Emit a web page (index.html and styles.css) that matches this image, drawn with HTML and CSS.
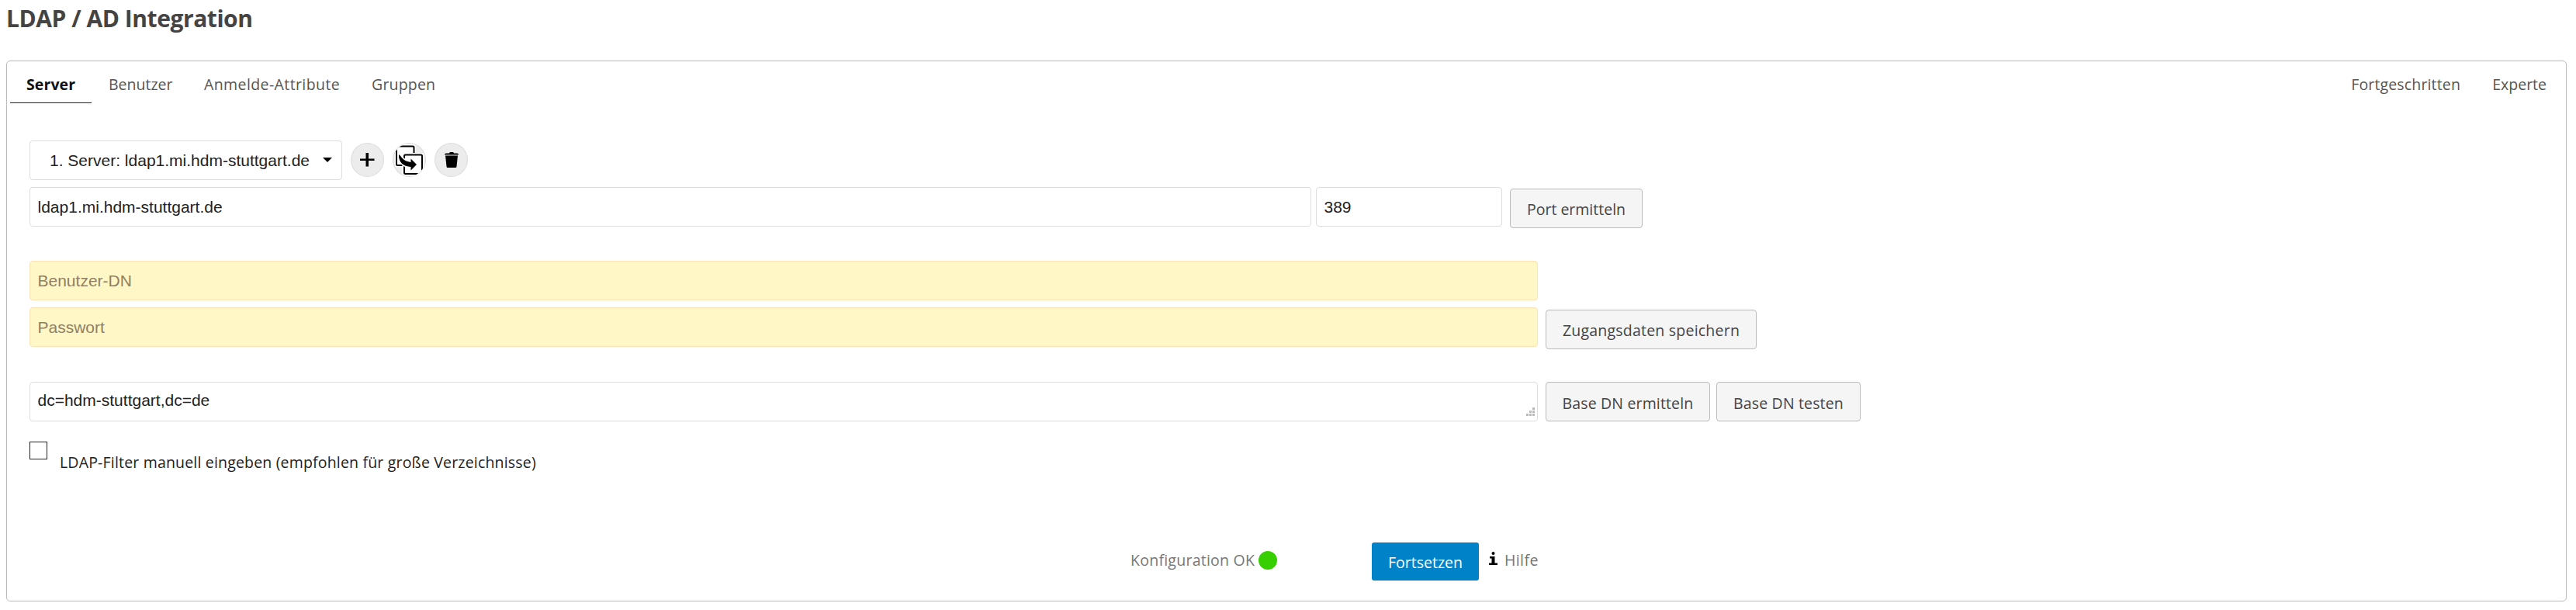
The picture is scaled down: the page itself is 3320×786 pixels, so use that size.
FILE: index.html
```html
<!DOCTYPE html>
<html lang="de">
<head>
<meta charset="utf-8">
<title>LDAP / AD Integration</title>
<link rel="stylesheet" href="styles.css">
</head>
<body>
<h1 class="title"><span>LDAP / AD Integration</span></h1>
<main class="panel">
  <nav class="tabs">
    <a class="tab tab-active"><span>Server</span></a>
    <a class="tab tab-user"><span>Benutzer</span></a>
    <a class="tab tab-login"><span>Anmelde-Attribute</span></a>
    <a class="tab tab-groups"><span>Gruppen</span></a>
    <a class="tab tab-advanced"><span>Fortgeschritten</span></a>
    <a class="tab tab-expert"><span>Experte</span></a>
  </nav>
  <div class="row server-row">
    <div class="field select"><span>1. Server: ldap1.mi.hdm-stuttgart.de</span>
      <svg class="caret" width="12" height="6" viewBox="0 0 12 6"><path d="M0 0h12L6 6z"/></svg>
    </div>
    <button class="round" aria-label="Hinzufügen"><svg width="41" height="42" viewBox="0 0 41 42"><path d="M18.500 12h3.500v7.500h7.500v2.500H22v7.500h-3.500V22H11v-2.500h7.500z"/></svg></button>
    <button class="round" aria-label="Kopieren"><svg width="41" height="42" viewBox="0 0 41 42">
      <g fill="none" stroke="#fff" stroke-width="5"><rect x="4" y="3.500" width="22.500" height="24.500" rx="1.500"/><rect x="14" y="14.500" width="23" height="24.500" rx="1.500"/></g>
      <rect x="4" y="3.500" width="22.500" height="24.500" rx="1.500" fill="#fff" stroke="#000" stroke-width="2"/>
      <rect x="14" y="14.500" width="23" height="24.500" rx="1.500" fill="#fff" stroke="#fff" stroke-width="5"/>
      <rect x="14" y="14.500" width="23" height="24.500" rx="1.500" fill="#fff" stroke="#000" stroke-width="2"/>
      <path d="M7 14.500c3 0 3 7.500 15.500 9.500v-4.500L30 27l-7.500 7.500v-4.500C13 29.500 6.500 24 7 14.500z" stroke="#fff" stroke-width="3" paint-order="stroke"/></svg></button>
    <button class="round" aria-label="Löschen"><svg width="41" height="42" viewBox="0 0 41 42"><path d="M12 14.500q0-2 2-2h4q0-1.500 1.500-1.500h3q1.500 0 1.500 1.500h4q2 0 2 2zM13 15.500h16l-1.500 14q-.2 1.500-1.500 1.500h-10q-1.300 0-1.500-1.500z"/></svg></button>
  </div>
  <div class="row host-row">
    <div class="field host"><span>ldap1.mi.hdm-stuttgart.de</span></div>
    <div class="field port"><span>389</span></div>
    <button class="btn btn-port"><span>Port ermitteln</span></button>
  </div>
  <div class="row user-row">
    <div class="field wide warn"><span>Benutzer-DN</span></div>
  </div>
  <div class="row pass-row">
    <div class="field wide warn"><span>Passwort</span></div>
    <button class="btn btn-save"><span>Zugangsdaten speichern</span></button>
  </div>
  <div class="row base-row">
    <div class="field wide base"><span>dc=hdm-stuttgart,dc=de</span>
      <svg class="grip" width="11" height="11" viewBox="0 0 11 11"><path d="M8 0h3v3H8zM4 4h3v3H4zM8 4h3v3H8zM0 8h3v3H0zM4 8h3v3H4zM8 8h3v3H8z"/></svg>
    </div>
    <button class="btn btn-detect"><span>Base DN ermitteln</span></button>
    <button class="btn btn-test"><span>Base DN testen</span></button>
  </div>
  <label class="row filter-row"><i class="checkbox"></i><span>LDAP-Filter manuell eingeben (empfohlen für große Verzeichnisse)</span></label>
  <footer class="footer">
    <div class="status"><span>Konfiguration OK</span></div>
    <i class="dot"></i>
    <button class="btn primary"><span>Fortsetzen</span></button>
    <svg class="info" width="11" height="17" viewBox="0 0 11 17"><circle cx="5.500" cy="2" r="2"/><path d="M1 6h6.500v8.500H11V17H0v-2.500h3.500v-6H1z"/></svg>
    <a class="help"><span>Hilfe</span></a>
  </footer>
</main>
</body>
</html>
```
FILE: styles.css
```css
* { box-sizing: border-box; }
body { margin: 0; background: #fff; color: #222; font: 19.5px/27px "Open Sans", "Noto Sans", sans-serif; }
span { white-space: nowrap; }
svg { display: block; flex: none; }

.title { margin: 0 0 0 8px; height: 78px; padding-top: 4px; font-size: 30px; line-height: 40px; letter-spacing: -.45px; color: #444; }
.panel { margin-left: 8px; width: 3300px; height: 697px; border: 1px solid #bbb; border-radius: 5px; }

/* Tabs */
.tabs { display: flex; height: 54px; padding: 0 25px 0 4px; color: #555; }
.tab { flex: none; padding-top: 16px; }
.tab-active { width: 105px; padding-left: 21px; color: #111; font-weight: 700; letter-spacing: .1px; border-bottom: 1px solid #222; }
.tab-user { width: 145px; padding-left: 22px; }
.tab-login { width: 216px; letter-spacing: .4px; }
.tab-groups { letter-spacing: .2px; }
.tab-advanced { margin-left: auto; width: 182px; letter-spacing: .15px; }

/* Form rows */
.row { display: flex; margin-left: 29px; }
.server-row { margin-top: 48px; height: 51px; }
.host-row { margin-top: 9px; height: 53px; }
.user-row { margin-top: 42px; height: 51px; }
.pass-row { margin-top: 9px; height: 54px; }
.base-row { margin-top: 42px; height: 51px; }
.filter-row { margin-top: 26px; height: 40px; }

.field { display: flex; flex: none; align-items: center; height: 51px; padding-left: 9.500px; border: 1px solid #ddd; border-radius: 4px; font-family: "Liberation Sans", Arial, sans-serif; font-size: 21px; }
.select { width: 403px; padding-left: 25px; }
.caret { margin: 0 0 2px 17px; }
.host { width: 1652px; }
.port { width: 240px; margin-left: 6px; }
.wide { width: 1944px; }
.warn { background: #fff7c5; border-color: #ffe3b4; color: #907f63; }
.base { padding-bottom: 4px; }
.grip { margin: 30px 3px 0 auto; fill: #bbb; }

.round { width: 43px; height: 44px; margin: 3px 0 0 11px; padding: 0; overflow: hidden; border: 1px solid #ddd; border-radius: 50%; background: #ececec; }

.btn { flex: none; height: 51px; margin-left: 10px; padding: 2px 0 0; border: 1px solid #bbb; border-radius: 4px; background: #f5f5f5; color: #444; font: inherit; }
.btn-port { width: 171px; margin-top: 2px; }
.btn-save { width: 272px; margin-top: 3px; letter-spacing: .22px; }
.btn-detect { width: 212px; padding-top: 3px; letter-spacing: .15px; }
.btn-test { width: 186px; margin-left: 8px; padding-top: 3px; letter-spacing: .15px; }

.checkbox { flex: none; width: 23px; height: 23px; border: 1px solid #222; }
.filter-row span { margin: 13px 0 0 16px; letter-spacing: .18px; }

/* Footer */
.footer { display: flex; margin-top: 90px; padding-left: 1448px; color: #777; }
.status { width: 165px; padding-top: 9px; letter-spacing: .25px; }
.dot { width: 24px; height: 24px; margin-top: 11px; border-radius: 50%; background: #37ce02; }
.primary { width: 138px; height: 49px; margin-left: 122px; border: 0; border-radius: 3px; background: #0082c9; color: #fff; }
.info { margin: 12px 0 0 13px; fill: #000; }
.help { margin-left: 9px; padding-top: 9px; letter-spacing: .4px; }
```
